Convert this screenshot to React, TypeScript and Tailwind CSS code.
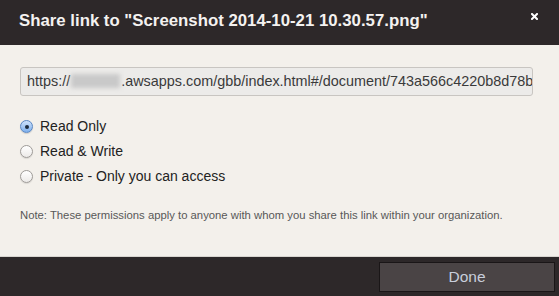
const options = [
  { label: "Read Only", checked: true },
  { label: "Read & Write", checked: false },
  { label: "Private - Only you can access", checked: false }
];

function Radio({ checked }: { checked: boolean }) {
  if (checked) {
    return (
      <span className="flex h-[13px] w-[13px] items-center justify-center rounded-full border border-[#5a87c4] bg-gradient-to-b from-[#cfe2fb] to-[#7fb0ec] shadow-[0_1px_1px_rgba(0,0,0,0.15)]">
        <span className="h-[4px] w-[4px] rounded-full bg-[#1c2a3c]" />
      </span>
    );
  }
  return <span className="h-[13px] w-[13px] rounded-full border border-[#9e9b98] bg-gradient-to-b from-white to-[#eceae8] shadow-[0_1px_1px_rgba(0,0,0,0.1)]" />;
}

export default function App() {
  return (
    <div className="flex h-[296px] w-[559px] flex-col overflow-hidden bg-[#f3f0eb] font-['Liberation_Sans',Arial,sans-serif]">
      <header className="flex h-[45px] shrink-0 items-start justify-between bg-[#2d2829] pl-[19px] pr-[21px] pt-[11px]">
        <h1 className="text-[16.8px] font-bold leading-[20px] text-[#f4f2f0]">Share link to "Screenshot 2014-10-21 10.30.57.png"</h1>
        <svg className="mt-[2px]" width="7" height="7" viewBox="0 0 7 7" aria-label="Close">
          <path d="M1 1L6 6M6 1L1 6" stroke="#ffffff" strokeWidth="2" strokeLinecap="square" />
        </svg>
      </header>

      <main className="flex flex-1 flex-col px-[20px] pt-[22px]">
        <div className="h-[29px] w-[513px] overflow-hidden whitespace-nowrap rounded-[3px] border border-[#c8c5c1] bg-[#ecebe9] pl-[6px] text-[14.4px] leading-[27px] text-[#3a3a3a]">
          https://<span className="mx-[1px] inline-block h-[14px] w-[49px] align-[-2px] bg-[#c9c9c9] blur-[2px]" />.awsapps.com/gbb/index.html#/document/743a566c4220b8d78b
        </div>

        <div className="mt-[22px] flex flex-col gap-[8px]">
          {options.map(o => (
            <label key={o.label} className="flex h-[17px] items-center gap-[7px] text-[14px] text-[#222]">
              <Radio checked={o.checked} />
              {o.label}
            </label>
          ))}
        </div>

        <p className="mt-[22px] text-[11.3px] text-[#585858]">Note: These permissions apply to anyone with whom you share this link within your organization.</p>
      </main>

      <footer className="flex h-[40px] shrink-0 items-center justify-end border-t border-[#d8d5d0] bg-[#2d2829] pr-[4px]">
        <button className="h-[30px] w-[176px] border border-[#1a1617] bg-[#4a4445] text-[15.5px] text-[#c8cedb]">Done</button>
      </footer>
    </div>
  );
}
